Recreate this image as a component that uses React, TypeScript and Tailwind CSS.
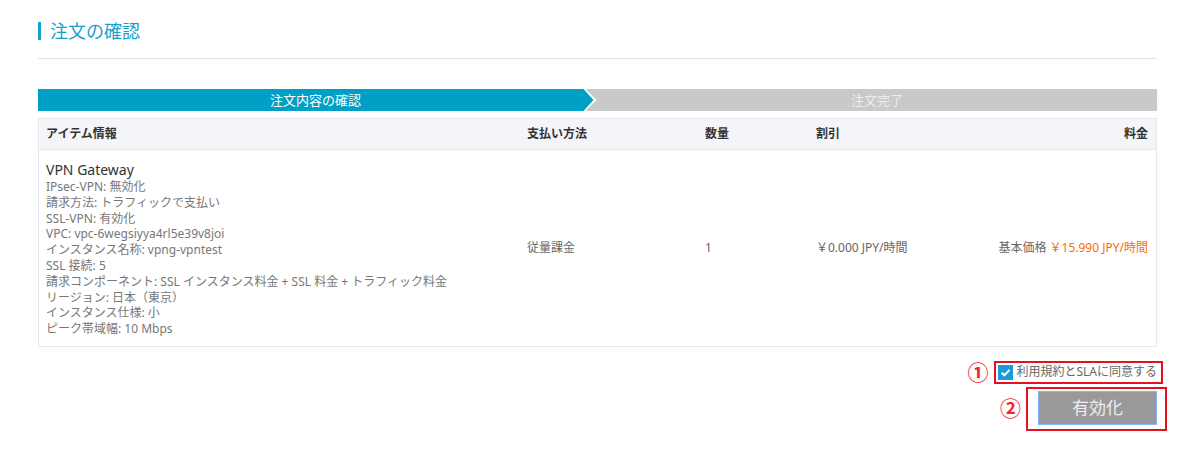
import React, { useState } from "react";

const font = "font-['Noto_Sans','Noto_Sans_CJK_JP',sans-serif]";

const details = [
    "IPsec-VPN: 無効化",
    "請求方法: トラフィックで支払い",
    "SSL-VPN: 有効化",
    "VPC: vpc-6wegsiyya4rl5e39v8joi",
    "インスタンス名称: vpng-vpntest",
    "SSL 接続: 5",
    "請求コンポーネント: SSL インスタンス料金 + SSL 料金 + トラフィック料金",
    "リージョン: 日本（東京）",
    "インスタンス仕様: 小",
    "ピーク帯域幅: 10 Mbps",
];

const cols = "grid grid-cols-[481px_178px_111px_1fr_200px]";

const App: React.FC = () => {
    const [agreed, setAgreed] = useState(true);

    return (
        <div className={`min-h-[458px] bg-white ${font}`}>
            <div className="ml-[38px] w-[1119px] pt-[22px]">
                {/* title */}
                <div className="flex items-center gap-[9px] h-[18px]">
                    <span className="w-[3px] h-[18px] bg-[#1a9fca]" />
                    <h1 className="text-[18px] leading-none text-[#1a9fca] font-normal">注文の確認</h1>
                </div>
                <div className="mt-[18px] border-t border-[#e3e3e3]" />

                {/* steps */}
                <div className="relative mt-[30px] flex h-[22px] text-[13px] leading-[22px]">
                    <div className="w-[545px] bg-[#00a0c6] text-white text-center pl-[10px]">注文内容の確認</div>
                    <div className="flex-1 bg-[#c9c9c9] text-[#ececec] text-center pl-[14px]">注文完了</div>
                    <svg className="absolute left-[545px] top-0" width="14" height="22" viewBox="0 0 14 22">
                        <polygon points="0,0 2.5,0 13.5,11 2.5,22 0,22" fill="#ffffff" />
                        <polygon points="0,0 0.5,0 10.5,11 0.5,22 0,22" fill="#00a0c6" />
                    </svg>
                </div>

                {/* table */}
                <div className="mt-[7px] border border-[#e6e8ee]">
                    <div className={`${cols} h-[31px] items-center bg-[#f4f5f9] border-b border-[#e6e8ee] text-[12px] font-bold text-[#333]`}>
                        <div className="pl-[7px]">アイテム情報</div>
                        <div className="pl-[7px]">支払い方法</div>
                        <div className="pl-[7px]">数量</div>
                        <div className="pl-[7px]">割引</div>
                        <div className="pr-[8px] text-right">料金</div>
                    </div>
                    <div className={`${cols} items-center text-[12px] text-[#666]`}>
                        <div className="pl-[7px] pt-[11px] pb-[9px]">
                            <div className="text-[14px] leading-[18px] text-[#333]">VPN Gateway</div>
                            {details.map((d) => (
                                <div key={d} className="leading-[15.8px] text-[#777]">{d}</div>
                            ))}
                        </div>
                        <div className="pl-[7px]">従量課金</div>
                        <div className="pl-[7px]">1</div>
                        <div className="pl-[7px]">￥0.000 JPY/時間</div>
                        <div className="pr-[8px] text-right">
                            基本価格 <span className="text-[#ff6a00]">￥15.990 JPY/時間</span>
                        </div>
                    </div>
                </div>

                {/* agreement */}
                <div className="mt-[14px] flex justify-end items-center -mr-[6px]">
                    <span className="mr-[6px] text-[21px] leading-none font-bold text-[#f3242f]">①</span>
                    <label className="flex items-center gap-[3px] h-[23px] border-2 border-[#e8101e] pl-[2px] pr-[4px] text-[12px] text-[#666] cursor-pointer">
                        <input
                            type="checkbox"
                            checked={agreed}
                            onChange={(e) => setAgreed(e.target.checked)}
                            className="sr-only"
                        />
                        <span className={`flex items-center justify-center w-[15px] h-[15px] ${agreed ? "bg-[#1a9ad8]" : "bg-white border border-[#ccc]"}`}>
                            {agreed && (
                                <svg width="11" height="11" viewBox="0 0 10 10">
                                    <path d="M1.5 5.2 L4 7.6 L8.6 2.6" stroke="#fff" strokeWidth="1.9" fill="none" />
                                </svg>
                            )}
                        </span>
                        利用規約とSLAに同意する
                    </label>
                </div>

                {/* submit */}
                <div className="mt-[3px] flex justify-end items-center -mr-[10px]">
                    <span className="mr-[5px] text-[21px] leading-none font-bold text-[#f3242f]">②</span>
                    <div className="border-2 border-[#e8101e] pl-[10px] pr-[8px] pt-[2px] pb-[4px]">
                        <button className="w-[119px] h-[34px] bg-[#999] border border-[#8ab4f8] text-[17px] text-[#eee]">
                            有効化
                        </button>
                    </div>
                </div>
            </div>
        </div>
    );
};

export default App;
